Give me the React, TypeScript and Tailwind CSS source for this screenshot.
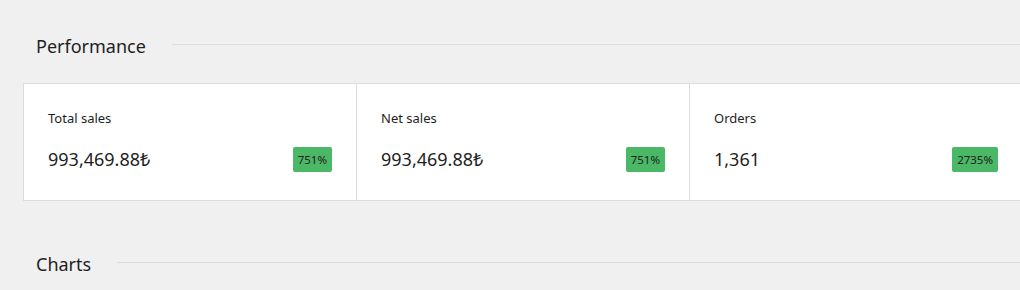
import React from 'react';

const stats = [
  { label: 'Total sales', value: '993,469.88₺', delta: '751%' },
  { label: 'Net sales', value: '993,469.88₺', delta: '751%' },
  { label: 'Orders', value: '1,361', delta: '2735%' },
];

function SectionHeading({ title }: { title: string }) {
  return (
    <div className="flex items-center h-[28px] pl-[13px]">
      <h2 className="text-[18px] leading-[28px] font-normal text-[#1e1e1e]">{title}</h2>
      <div className="flex-1 h-px bg-[#dcdcde] ml-[26px] -mt-[3px]" />
    </div>
  );
}

export default function App() {
  return (
    <div className="min-h-screen w-full overflow-hidden bg-[#f0f0f1] font-['Noto_Sans',sans-serif] text-[#1e1e1e]">
      <div className="pl-[23px] pt-[32px]">
        <SectionHeading title="Performance" />

        {/* Summary cards */}
        <div className="mt-[23px] flex w-max border-y border-l border-[#dcdcde] bg-white">
          {stats.map((s) => (
            <div key={s.label} className="w-[333px] h-[116px] border-r border-[#dcdcde] px-[24px] pt-[25px]">
              <div className="text-[13px] leading-[18px]">{s.label}</div>
              <div className="mt-[18px] flex items-center justify-between h-[28px]">
                <span className="text-[18px] leading-[28px]">{s.value}</span>
                <span className="rounded-[2px] bg-[#4ab866] px-[5px] text-[11.5px] leading-[25px] text-[#1e1e1e]">
                  {s.delta}
                </span>
              </div>
            </div>
          ))}
        </div>

        <div className="mt-[49px]">
          <SectionHeading title="Charts" />
        </div>
      </div>
    </div>
  );
}
